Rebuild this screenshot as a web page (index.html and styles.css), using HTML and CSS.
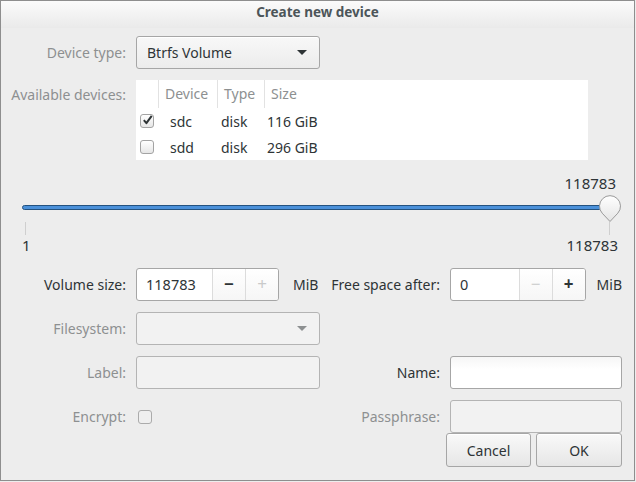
FILE: index.html
```html
<!DOCTYPE html>
<html>
<head>
<meta charset="utf-8">
<link rel="stylesheet" href="styles.css">
</head>
<body>
<div class="window">
  <div class="titlebar">Create new device</div>
  <div class="content">
    <div class="row row-type">
      <span class="lbl dim">Device type:</span>
      <div class="combo"><span>Btrfs Volume</span><span class="arrow"></span></div>
    </div>
    <div class="row row-devices">
      <span class="lbl dim lbl-top">Available devices:</span>
      <div class="devtable">
        <div class="thead">
          <div class="c c-chk"></div>
          <div class="c c-dev">Device</div>
          <div class="c c-type">Type</div>
          <div class="c c-size">Size</div>
        </div>
        <div class="trow">
          <div class="c c-chk"><span class="check on"><svg width="12" height="12" viewBox="0 0 12 12"><path d="M2 6.2 L4.8 9.4 L10.6 1.6" fill="none" stroke="#2e3436" stroke-width="2.2" stroke-linejoin="round"/></svg></span></div>
          <div class="c c-dev">sdc</div>
          <div class="c c-type">disk</div>
          <div class="c c-size">116 GiB</div>
        </div>
        <div class="trow">
          <div class="c c-chk"><span class="check"></span></div>
          <div class="c c-dev">sdd</div>
          <div class="c c-type">disk</div>
          <div class="c c-size">296 GiB</div>
        </div>
      </div>
    </div>
    <div class="slider">
      <div class="val-top">118783</div>
      <div class="track-area">
        <div class="track"></div>
        <svg class="knob" width="24" height="28" viewBox="0 0 24 28">
          <defs>
            <linearGradient id="kg" x1="0" y1="0" x2="0" y2="1">
              <stop offset="0" stop-color="#ffffff"/>
              <stop offset="1" stop-color="#e4e4e4"/>
            </linearGradient>
          </defs>
          <path d="M12 26.5 L4.2 18.2 A10.5 10.5 0 1 1 19.8 18.2 Z" fill="url(#kg)" stroke="#9a9a9a" stroke-width="1"/>
        </svg>
      </div>
      <div class="ticks"><span class="tick"></span><span class="tick"></span></div>
      <div class="marks"><span>1</span><span>118783</span></div>
    </div>
    <div class="form">
      <span class="lbl">Volume size:</span>
      <div class="withunit unit-a">
        <div class="spin spin-a">
          <span class="sp-entry">118783</span>
          <span class="sp-btn">&#8722;</span>
          <span class="sp-btn off">+</span>
        </div>
        <span class="unit">MiB</span>
      </div>
      <span class="lbl">Free space after:</span>
      <div class="withunit unit-b">
        <div class="spin spin-b">
          <span class="sp-entry">0</span>
          <span class="sp-btn off">&#8722;</span>
          <span class="sp-btn">+</span>
        </div>
        <span class="unit">MiB</span>
      </div>

      <span class="lbl dim">Filesystem:</span>
      <div class="combo disabled"><span></span><span class="arrow light"></span></div>
      <span></span>
      <span></span>

      <span class="lbl dim">Label:</span>
      <div class="entry disabled"></div>
      <span class="lbl">Name:</span>
      <div class="entry"></div>

      <span class="lbl dim">Encrypt:</span>
      <div class="chkcell"><span class="check off"></span></div>
      <span class="lbl dim">Passphrase:</span>
      <div class="entry disabled"></div>
    </div>
    <div class="actions">
      <button class="btn btn-cancel">Cancel</button>
      <button class="btn btn-ok">OK</button>
    </div>
  </div>
</div>
</body>
</html>
```

FILE: styles.css
```css
* { box-sizing: border-box; }
html, body {
  margin: 0;
  padding: 0;
  background: #ededed;
}
body {
  font-family: "Noto Sans", "DejaVu Sans", sans-serif;
  font-size: 14px;
  color: #2e3436;
}
.window {
  width: 635px;
  height: 481px;
  border: 1px solid #8e8e8e;
  background: #ededed;
  display: flex;
  flex-direction: column;
}
.titlebar {
  height: 27px;
  line-height: 23px;
  text-align: center;
  font-weight: bold;
  font-size: 13.5px;
  color: #4c5559;
  background: linear-gradient(#fbfbfb, #eaeaea);
}
.content {
  display: flex;
  flex-direction: column;
}
.row {
  display: flex;
  gap: 10px;
}
.lbl {
  width: 125px;
  text-align: right;
  align-self: center;
  white-space: nowrap;
  line-height: 17px;
}
.dim { color: #8d9091; }
.lbl-top { align-self: flex-start; margin-top: 6px; }
.row-type { margin-top: 8px; }
.combo {
  width: 184px;
  height: 33px;
  border: 1px solid #a6a6a6;
  border-radius: 3px;
  background: linear-gradient(#f8f8f8, #ececec);
  display: flex;
  align-items: center;
  justify-content: space-between;
  padding: 0 11px 0 10px;
  box-shadow: inset 0 1px #ffffff;
}
.combo.disabled {
  background: #f2f2f2;
  border-color: #b4b4b4;
  box-shadow: none;
}
.arrow {
  width: 0;
  height: 0;
  border-left: 5px solid transparent;
  border-right: 5px solid transparent;
  border-top: 5px solid #2e3436;
  margin-right: 1px;
}
.arrow.light { border-top-color: #8d9091; }
.row-devices { margin-top: 11px; }
.devtable {
  width: 452px;
  height: 80px;
  background: #ffffff;
  display: flex;
  flex-direction: column;
}
.thead, .trow {
  display: flex;
  align-items: center;
}
.thead {
  height: 28px;
  color: #8d9091;
}
.thead .c { height: 28px; line-height: 28px; border-right: 1px solid #e2e2e2; }
.thead .c-size { border-right: none; }
.trow { height: 27px; }
.c-chk { width: 23px; padding-left: 4px; display: flex; align-items: center; }
.c-dev { width: 59px; padding-left: 6px; }
.c-type { width: 47px; padding-left: 6px; }
.c-size { flex: 1; padding-left: 6px; }
.trow .c-dev { padding-left: 11px; }
.trow .c-type { padding-left: 3px; }
.trow .c-size { padding-left: 2px; }
.check {
  width: 14px;
  height: 14px;
  border: 1px solid #a3a3a3;
  border-radius: 3px;
  background: linear-gradient(#ffffff, #e6e6e6);
  display: inline-flex;
  align-items: center;
  justify-content: center;
}
.check svg { margin-top: -3px; margin-left: 1px; }
.check.off { background: #efefef; border-color: #ababab; }
.slider {
  margin-top: 15px;
  padding: 0 16px 0 21px;
  display: flex;
  flex-direction: column;
}
.val-top {
  text-align: right;
  line-height: 16px;
  padding-right: 2px;
  font-size: 15px;
}
.track-area {
  position: relative;
  height: 31px;
  display: flex;
  align-items: center;
}
.track {
  width: 580px;
  height: 5px;
  background: #4a90d9;
  border: 1px solid #24527f;
  border-radius: 3px;
  margin-top: 1px;
}
.knob {
  position: absolute;
  left: 576px;
  top: 4px;
}
.ticks {
  height: 14px;
  display: flex;
  justify-content: space-between;
  padding: 0 8px 0 3px;
}
.tick {
  width: 1px;
  height: 13px;
  background: #cfcfcf;
}
.marks {
  display: flex;
  justify-content: space-between;
  line-height: 16px;
  margin-top: 1px;
  font-size: 15px;
}
.form {
  margin-top: 15px;
  display: grid;
  grid-template-columns: 125px 184px 110px 172px;
  grid-auto-rows: 33px;
  column-gap: 10px;
  row-gap: 11px;
}
.form .lbl { width: auto; }
.withunit {
  display: flex;
  align-items: center;
}
.unit-a { gap: 14px; }
.unit-b { gap: 11px; }
.spin {
  height: 33px;
  display: flex;
  border: 1px solid #a6a6a6;
  border-radius: 3px;
  background: #ffffff;
  overflow: hidden;
}
.spin-a { width: 143px; }
.spin-b { width: 137px; }
.sp-entry {
  flex: 1;
  padding-left: 9px;
  line-height: 31px;
  font-size: 14.5px;
}
.sp-btn {
  width: 33px;
  border-left: 1px solid #dcdcdc;
  text-align: center;
  line-height: 30px;
  font-size: 17px;
  font-weight: bold;
  color: #2e3436;
  background: linear-gradient(#ffffff, #f6f6f6);
}
.sp-btn.off { color: #c9caca; font-weight: normal; }
.entry {
  border: 1px solid #a6a6a6;
  border-radius: 3px;
  background: linear-gradient(#f6f6f6, #ffffff 40%);
}
.entry.disabled {
  background: #f2f2f2;
  border-color: #b4b4b4;
}
.chkcell {
  display: flex;
  align-items: center;
  padding-left: 2px;
}
.actions {
  display: flex;
  justify-content: flex-end;
  gap: 5px;
  padding-right: 12px;
}
.btn {
  height: 34px;
  border: 1px solid #a6a6a6;
  border-radius: 3px;
  background: linear-gradient(#f9f9f9, #e6e6e6);
  box-shadow: inset 0 1px #ffffff;
  font-family: "Noto Sans", "DejaVu Sans", sans-serif;
  font-size: 14px;
  color: #2e3436;
  padding: 0;
}
.btn-cancel { width: 85px; }
.btn-ok { width: 86px; }
```
